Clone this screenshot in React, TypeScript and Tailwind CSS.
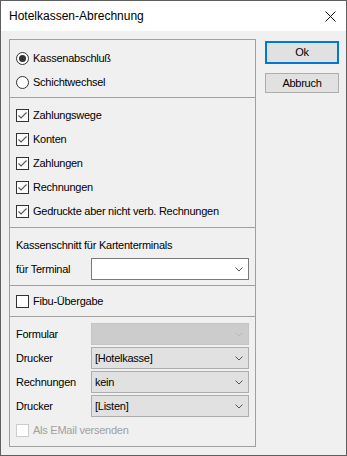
import React from 'react';

const Radio: React.FC<{ checked?: boolean; label: string }> = ({ checked, label }) => (
  <div className="h-[24px] flex items-center gap-[4px]">
    <span className="w-[13px] h-[13px] rounded-full border border-[#333333] bg-white flex items-center justify-center shrink-0">
      {checked && <span className="w-[7px] h-[7px] rounded-full bg-[#333333]" />}
    </span>
    <span>{label}</span>
  </div>
);

const Check: React.FC<{ checked?: boolean; disabled?: boolean; label: string }> = ({ checked, disabled, label }) => (
  <div className={`h-[24px] flex items-center gap-[4px] ${disabled ? 'text-[#a0a0a0]' : ''}`}>
    <span
      className={`w-[13px] h-[13px] border bg-white flex items-center justify-center shrink-0 ${
        disabled ? 'border-[#cccccc]' : 'border-[#333333]'
      }`}
    >
      {checked && (
        <svg width="11" height="11" viewBox="0 0 11 11">
          <path d="M1.5 5.5 L4 8 L9.5 2.5" fill="none" stroke="#555555" strokeWidth="1.1" />
        </svg>
      )}
    </span>
    <span>{label}</span>
  </div>
);

const Chevron: React.FC<{ color?: string }> = ({ color = '#555555' }) => (
  <svg width="8" height="5" viewBox="0 0 8 5" className="shrink-0">
    <path d="M0.5 0.5 L4 4 L7.5 0.5" fill="none" stroke={color} strokeWidth="1" />
  </svg>
);

type ComboKind = 'white' | 'gray' | 'disabled';

const Combo: React.FC<{ value?: string; kind: ComboKind }> = ({ value, kind }) => {
  const cls =
    kind === 'white'
      ? 'bg-white border-[#7a7a7a]'
      : kind === 'gray'
      ? 'bg-[#e1e1e1] border-[#adadad]'
      : 'bg-[#cccccc] border-[#c4c4c4]';
  return (
    <div className={`w-[158px] h-[22px] border flex items-center justify-between pl-[3px] pr-[5px] ${cls}`}>
      <span>{value}</span>
      <Chevron color={kind === 'disabled' ? '#b8b8b8' : '#555555'} />
    </div>
  );
};

const Sep = () => <div className="h-px bg-[#a0a0a0]" />;

const FieldRow: React.FC<{ label: string; value?: string; kind: ComboKind }> = ({ label, value, kind }) => (
  <div className="h-[24px] flex items-center">
    <span className="w-[75px]">{label}</span>
    <Combo value={value} kind={kind} />
  </div>
);

export default function App() {
  return (
    <div className="w-[347px] h-[456px] border border-[#5f5f5f] bg-[#f0f0f0] flex flex-col font-['Liberation_Sans',Arial,sans-serif] text-black">
      <div className="h-[30px] bg-white flex items-center justify-between pl-[8px] pr-[10px] text-[12px]">
        <span>Hotelkassen-Abrechnung</span>
        <svg width="11" height="11" viewBox="0 0 11 11">
          <path d="M0.5 0.5 L10.5 10.5 M10.5 0.5 L0.5 10.5" stroke="#111111" strokeWidth="1" />
        </svg>
      </div>

      <div className="flex pt-[8px] pl-[8px] gap-[9px] text-[11px] tracking-[-0.25px]">
        <div className="w-[247px] h-[408px] border border-[#a0a0a0] flex flex-col">
          <div className="h-[57px] pt-[6px] px-[6px]">
            <Radio checked label="Kassenabschluß" />
            <Radio label="Schichtwechsel" />
          </div>
          <Sep />
          <div className="h-[129px] pt-[5px] px-[6px]">
            <Check checked label="Zahlungswege" />
            <Check checked label="Konten" />
            <Check checked label="Zahlungen" />
            <Check checked label="Rechnungen" />
            <Check checked label="Gedruckte aber nicht verb. Rechnungen" />
          </div>
          <Sep />
          <div className="h-[57px] pt-[5px] px-[6px]">
            <div className="h-[24px] flex items-center">Kassenschnitt für Kartenterminals</div>
            <div className="mt-[1px] flex items-center">
              <span className="w-[75px]">für Terminal</span>
              <Combo kind="white" />
            </div>
          </div>
          <Sep />
          <div className="h-[30px] pt-[3px] px-[6px]">
            <Check label="Fibu-Übergabe" />
          </div>
          <Sep />
          <div className="flex-1 pt-[5px] px-[6px]">
            <FieldRow label="Formular" kind="disabled" />
            <FieldRow label="Drucker" value="[Hotelkasse]" kind="gray" />
            <FieldRow label="Rechnungen" value="kein" kind="gray" />
            <FieldRow label="Drucker" value="[Listen]" kind="gray" />
            <Check disabled label="Als EMail versenden" />
          </div>
        </div>

        <div className="flex flex-col pt-[2px] gap-[9px]">
          <button className="w-[74px] h-[23px] bg-[#e1e1e1] border-2 border-[#0078d7] flex items-center justify-center">
            Ok
          </button>
          <button className="w-[74px] h-[20px] bg-[#e1e1e1] border border-[#adadad] flex items-center justify-center">
            Abbruch
          </button>
        </div>
      </div>
    </div>
  );
}
